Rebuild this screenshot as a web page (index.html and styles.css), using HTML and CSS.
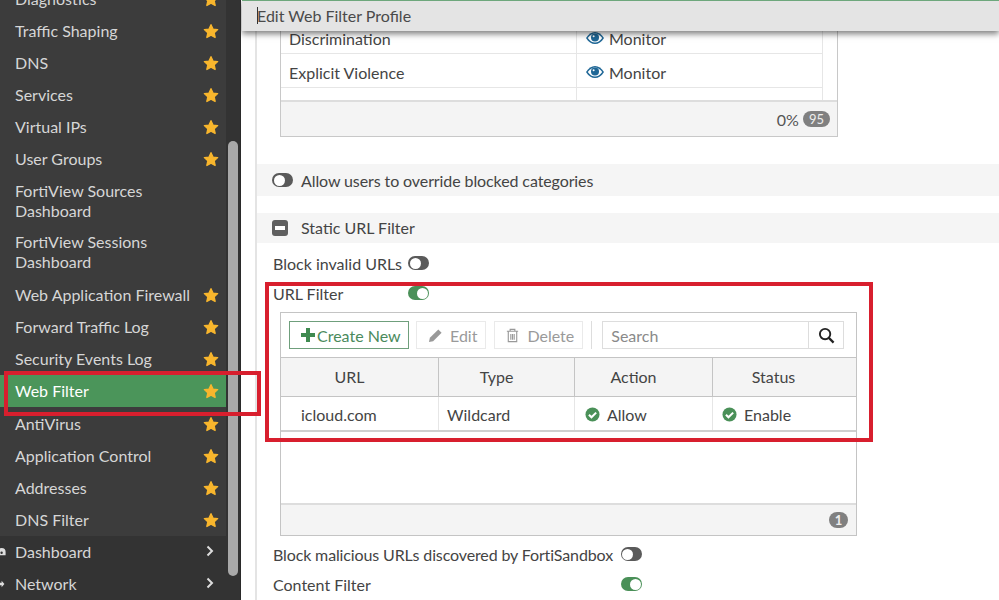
FILE: index.html
```html
<!DOCTYPE html>
<html lang="en">
<head>
<meta charset="utf-8">
<title>Edit Web Filter Profile</title>
<link rel="stylesheet" href="styles.css">
</head>
<body>
<svg class="defs" width="0" height="0">
  <symbol id="star" viewBox="0 0 24 24"><path d="M12 2.500l3 6.600 7 .8-5.200 4.800 1.400 7-6.200-3.500-6.200 3.500 1.400-7L2 9.900l7-.8z" stroke="#f8b62d" stroke-width="2" stroke-linejoin="round"/></symbol>
  <symbol id="check" viewBox="0 0 16 16"><circle cx="8" cy="8" r="7.500" fill="#4a9058"/><path d="M4.200 8.300l2.700 2.700 5-5" fill="none" stroke="#fff" stroke-width="2.200"/></symbol>
  <symbol id="eye" viewBox="0 0 18 12"><path d="M0 6C2.500 2 5.500 0 9 0s6.500 2 9 6c-2.500 4-5.500 6-9 6S2.500 10 0 6z" fill="#1f6796"/><path d="M1.800 6C4 3 6.300 1.400 9 1.400S14 3 16.200 6C14 9 11.700 10.600 9 10.600S4 9 1.800 6z" fill="#fff"/><circle cx="9" cy="5.600" r="4" fill="#1f6796"/><circle cx="7.600" cy="4.300" r="1" fill="#fff"/></symbol>
</svg>
<div class="app">
  <aside class="sidebar">
    <div class="nav-scroll">
      <ul class="nav">
        <li class="item">Diagnostics<svg class="star"><use href="#star"/></svg></li>
        <li class="item">Traffic Shaping<svg class="star"><use href="#star"/></svg></li>
        <li class="item">DNS<svg class="star"><use href="#star"/></svg></li>
        <li class="item">Services<svg class="star"><use href="#star"/></svg></li>
        <li class="item">Virtual IPs<svg class="star"><use href="#star"/></svg></li>
        <li class="item">User Groups<svg class="star"><use href="#star"/></svg></li>
        <li class="item tall">FortiView Sources<br>Dashboard</li>
        <li class="item tall second">FortiView Sessions<br>Dashboard</li>
        <li class="item">Web Application Firewall<svg class="star"><use href="#star"/></svg></li>
        <li class="item">Forward Traffic Log<svg class="star"><use href="#star"/></svg></li>
        <li class="item">Security Events Log<svg class="star"><use href="#star"/></svg></li>
        <li class="item active">Web Filter<svg class="star"><use href="#star"/></svg></li>
        <li class="item">AntiVirus<svg class="star"><use href="#star"/></svg></li>
        <li class="item">Application Control<svg class="star"><use href="#star"/></svg></li>
        <li class="item">Addresses<svg class="star"><use href="#star"/></svg></li>
        <li class="item">DNS Filter<svg class="star"><use href="#star"/></svg></li>
        <li class="item top">
          <svg class="top-icon" viewBox="0 0 10 12"><path d="M-3 6a5 5 0 0 1 10 0v4H-3z" fill="#ddd"/><circle cx="2" cy="7" r="1.500" fill="#333"/></svg>
          Dashboard
          <svg class="chev" viewBox="0 0 8 12"><path d="M1.500 1.500L6 6l-4.500 4.500" fill="none" stroke="#ddd" stroke-width="2"/></svg>
        </li>
        <li class="item top">
          <svg class="top-icon" viewBox="0 0 10 12"><path d="M-1 4.500h3V2l3.500 4L2 10V7.500h-3z" fill="#ddd"/></svg>
          Network
          <svg class="chev" viewBox="0 0 8 12"><path d="M1.500 1.500L6 6l-4.500 4.500" fill="none" stroke="#ddd" stroke-width="2"/></svg>
        </li>
      </ul>
    </div>
    <div class="scrolltrack"><div class="scrollthumb"></div></div>
  </aside>

  <main class="main">
    <header class="titlebar"><span class="caret"></span>Edit Web Filter Profile</header>
    <div class="content">
      <section class="cat-panel">
        <div class="cat-scroll">
          <div class="cat-row"><div class="cat-name">Discrimination</div><div class="cat-act"><svg class="eye"><use href="#eye"/></svg>Monitor</div></div>
          <div class="cat-row"><div class="cat-name">Explicit Violence</div><div class="cat-act"><svg class="eye"><use href="#eye"/></svg>Monitor</div></div>
          <div class="cat-row stub"><div class="cat-name"></div><div class="cat-act"></div></div>
        </div>
        <div class="cat-foot">0%<span class="pill">95</span></div>
      </section>

      <div class="band band-allow"><span class="toggle off"></span>Allow users to override blocked categories</div>
      <div class="band band-static"><span class="minus"></span>Static URL Filter</div>

      <div class="field f-invalid">Block invalid URLs<span class="toggle off"></span></div>
      <div class="field f-url"><span class="lbl">URL Filter</span><span class="toggle on"></span></div>

      <section class="url-panel">
        <div class="toolbar">
          <button class="btn create"><svg class="plus" viewBox="0 0 14 14"><path d="M5 0h4v5h5v4H9v5H5V9H0V5h5z"/></svg>Create New</button>
          <button class="btn muted"><svg class="ic" viewBox="0 0 16 16"><path d="M1 15l1-4.500L11 1.500l3.500 3.500-9 9z" fill="#999"/></svg>Edit</button>
          <button class="btn muted del"><svg class="ic" viewBox="0 0 16 16"><path d="M2 3.500h12M5.500 3V1.500h5V3M3.500 4v10.500h9V4M6.200 6.500v6M8 6.500v6M9.800 6.500v6" fill="none" stroke="#999" stroke-width="1.200"/></svg>Delete</button>
          <span class="sep"></span>
          <div class="search"><span class="search-text">Search</span><span class="search-btn"><svg viewBox="0 0 18 18" width="17" height="17"><circle cx="7.500" cy="7.500" r="5.500" fill="none" stroke="#222" stroke-width="2"/><path d="M11.500 11.500l5 5" stroke="#222" stroke-width="2.400"/></svg></span></div>
        </div>
        <div class="grid head">
          <div>URL</div><div>Type</div><div>Action</div><div>Status</div>
        </div>
        <div class="grid body">
          <div class="c-url">icloud.com</div>
          <div>Wildcard</div>
          <div><svg class="chk"><use href="#check"/></svg>Allow</div>
          <div><svg class="chk"><use href="#check"/></svg>Enable</div>
        </div>
        <div class="url-empty"></div>
        <div class="url-foot"><span class="pill round">1</span></div>
      </section>

      <div class="field f-mal">Block malicious URLs discovered by FortiSandbox<span class="toggle off"></span></div>
      <div class="field f-content"><span class="lbl-wide">Content Filter</span><span class="toggle on"></span></div>
    </div>
  </main>
</div>
<div class="mark mark-big"></div>
<div class="mark mark-small"></div>
</body>
</html>
```

FILE: styles.css
```css
* { box-sizing: border-box; }
html, body { margin: 0; height: 600px; overflow: hidden; }
body { font-family: Lato, "Open Sans", sans-serif; font-size: 16px; color: #444; background: #fff; position: relative; }
.defs { position: absolute; }
.app { display: flex; height: 600px; width: 999px; overflow: hidden; }

/* sidebar */
.sidebar { width: 241px; flex: none; background: #333; display: flex; position: relative; border-right: 1px solid #2a2a2a; overflow: hidden; }
.nav-scroll { width: 226px; flex: none; overflow: hidden; }
.nav { list-style: none; margin: -17px 0 0; padding: 0; background: #3c3c3c; }
.item { height: 32px; padding: 0 0 1px 15px; display: flex; align-items: center; position: relative; color: #d6d6d6; font-size: 16px; white-space: nowrap; }
.item.tall { height: 52px; display: block; padding: 6px 0 0 15px; line-height: 20px; }
.item.tall.second { padding-top: 5px; }
.item.active { background: #4b955a; color: #fff; margin-bottom: 1px; }
.item.top { background: #333; }
.star { position: absolute; left: 203px; top: 8px; width: 16px; height: 16px; fill: #f8b62d; }
.top-icon { position: absolute; left: 0; top: 10px; width: 8px; height: 12px; }
.chev { position: absolute; left: 206px; top: 9px; width: 8px; height: 12px; }
.scrolltrack { width: 14px; padding: 141px 2px 24px 2px; }
.scrollthumb { height: 100%; width: 10px; background: #a9a9a9; border-radius: 5px; }

/* main */
.main { flex: 1; min-width: 0; position: relative; height: 600px; overflow: hidden; }
.titlebar { height: 31px; margin-left: 1px; background: #e4e4e4; border-top: 1px solid #6da77c; box-shadow: 0 3px 6px rgba(0,0,0,.5); padding: 0 0 2px 15px; display: flex; align-items: center; font-size: 16px; color: #4a4a4a; position: relative; z-index: 2; }
.caret { width: 1px; height: 17px; background: #333; margin-right: -1px; }
.content { margin: -11px 0 0 14px; border-left: 2px solid #e4e4e4; height: 600px; padding-left: 0; }

.cat-panel { margin-left: 23px; width: 558px; height: 117px; border: 1px solid #c8c8c8; border-top: 0; display: flex; flex-direction: column; }
.cat-scroll { flex: 1; width: 542px; border-right: 1px solid #e6e6e6; overflow: hidden; }
.cat-row { height: 34px; display: flex; border-bottom: 1px solid #e6e6e6; }
.cat-row.stub { border: 0; height: 12px; }
.cat-name { width: 296px; padding: 3px 0 0 8px; display: flex; align-items: center; border-right: 1px solid #e6e6e6; }
.cat-act { padding: 3px 0 0 9px; display: flex; align-items: center; }
.eye { width: 18px; height: 12px; margin-right: 5px; }
.cat-foot { height: 36px; flex: none; background: #f4f4f4; border-top: 2px solid #ddd; display: flex; align-items: center; justify-content: flex-end; padding-right: 7px; color: #555; }
.pill { background: #808080; color: #eee; font-size: 13px; line-height: 16px; height: 16px; padding: 0 6px; border-radius: 8px; margin-left: 4px; }
.pill.round { padding: 0; width: 19px; height: 16px; text-align: center; margin: 0; font-weight: bold; line-height: 16px; }

.band { background: #f5f5f5; display: flex; align-items: center; padding-left: 15px; margin-left: 0; }
.band-allow { height: 32px; margin-top: 27px; letter-spacing: -.1px; }
.band-static { height: 30px; margin-top: 17px; padding-bottom: 1px; }
.toggle { display: inline-block; width: 21px; height: 14px; border-radius: 7px; background: #5a5a5a; position: relative; flex: none; }
.toggle::after { content: ""; position: absolute; left: 1.500px; top: 1.500px; width: 11px; height: 11px; border-radius: 50%; background: #fff; }
.toggle.on { background: #4a9058; }
.toggle.on::after { left: 8.500px; }
.band .toggle { margin-right: 8px; }
.minus { width: 16px; height: 16px; background: #5f5f5f; border-radius: 3px; margin-right: 13px; position: relative; }
.minus::after { content: ""; position: absolute; left: 3px; right: 3px; top: 6px; height: 4px; background: #fff; }

.field { display: flex; align-items: center; padding-left: 16px; height: 20px; }
.f-invalid { margin-top: 10px; }
.f-invalid .toggle { margin-left: 6px; }
.f-url { margin-top: 10px; }
.lbl { width: 135px; }
.lbl-wide { width: 348px; }

.url-panel { margin: 9px 0 0 23px; width: 577px; height: 224px; border: 1px solid #c4c4c4; display: flex; flex-direction: column; }
.toolbar { height: 44px; flex: none; display: flex; align-items: center; padding: 0 12px 0 8px; }
.btn { font: inherit; height: 28px; padding: 0 8px 0 11px; background: #fff; display: flex; align-items: center; border: 1px solid #eaeaea; color: #9a9a9a; margin-right: 8px; }
.btn.del { padding-left: 10px; }
.btn.create { width: 120px; border-color: #6f9f7c; color: #4a8a5c; padding: 0 0 0 11px; margin-right: 7px; background: #fff; }
.plus { width: 14px; height: 14px; fill: #3f8a50; margin-right: 2px; }
.ic { width: 15px; height: 15px; margin-right: 7px; flex: none; }
.sep { width: 1px; height: 28px; background: #ddd; margin: 0 10px 0 0; }
.search { flex: 1; height: 28px; border: 1px solid #ddd; display: flex; }
.search-text { flex: 1; padding-left: 8px; color: #8a8a8a; display: flex; align-items: center; }
.search-btn { width: 35px; border-left: 1px solid #ddd; display: flex; align-items: center; justify-content: center; }

.grid { display: grid; grid-template-columns: 158px 136px 138px 1fr; flex: none; }
.grid.head { height: 40px; background: #f4f4f4; border-top: 1px solid #c4c4c4; border-bottom: 1px solid #c4c4c4; }
.grid.head > div { display: flex; align-items: center; justify-content: center; padding: 0 20px 2px 0; border-right: 1px solid #c4c4c4; }
.grid.head > div:last-child { border: 0; padding-right: 22px; }
.grid.body { height: 35px; border-bottom: 2px solid #cfcfcf; }
.grid.body > div { display: flex; align-items: center; padding: 2px 0 0 8px; border-right: 1px solid #e6e6e6; }
.grid.body > div:last-child { border: 0; padding-left: 7px; }
.grid.body > .c-url { padding-left: 20px; }
.chk { width: 15px; height: 15px; margin: 0 7px 0 2px; }
.url-empty { flex: 1; }
.url-foot { height: 32px; flex: none; background: #f4f4f4; border-top: 2px solid #ddd; display: flex; align-items: center; justify-content: flex-end; padding-right: 8px; }

.f-mal { margin-top: 8px; letter-spacing: -.13px; }
.f-mal .toggle { margin-left: 8px; }
.f-content { margin-top: 10px; }

/* annotation rectangles drawn over the screenshot */
.mark { position: absolute; border: 4px solid #d81f2e; pointer-events: none; z-index: 5; }
.mark-big { left: 265px; top: 282px; width: 608px; height: 160px; }
.mark-small { left: 4px; top: 371px; width: 257px; height: 45px; }
```
